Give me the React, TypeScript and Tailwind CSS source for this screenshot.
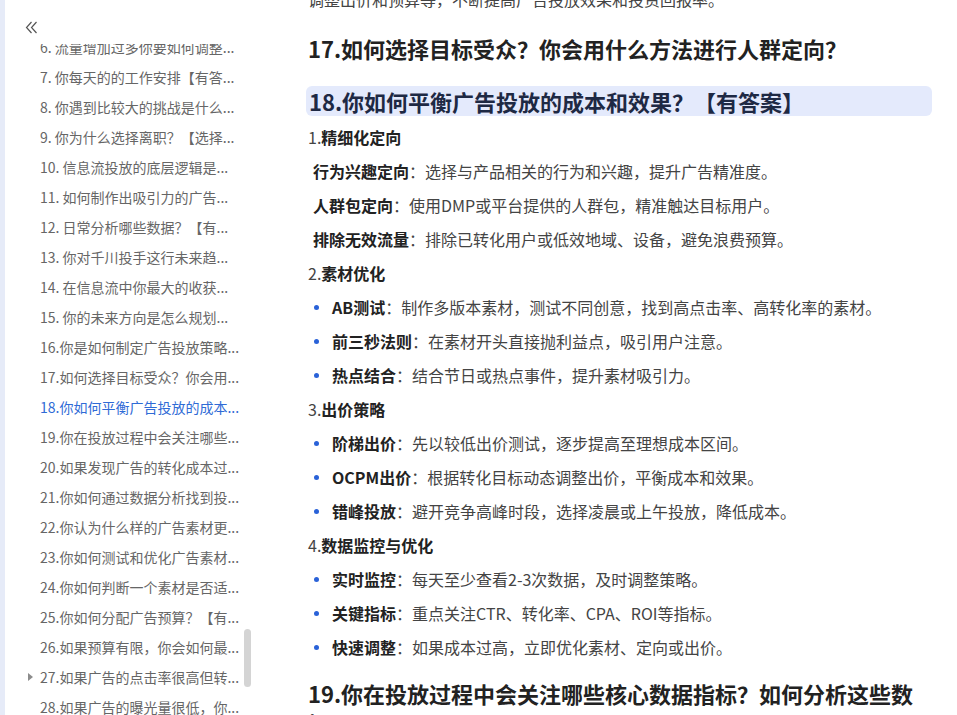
import React from "react";

const tocItems = [
  "6. 流量增加过多你要如何调整...",
  "7. 你每天的的工作安排【有答...",
  "8. 你遇到比较大的挑战是什么...",
  "9. 你为什么选择离职？【选择...",
  "10. 信息流投放的底层逻辑是...",
  "11. 如何制作出吸引力的广告...",
  "12. 日常分析哪些数据？【有...",
  "13. 你对千川投手这行未来趋...",
  "14. 在信息流中你最大的收获...",
  "15. 你的未来方向是怎么规划...",
  "16.你是如何制定广告投放策略...",
  "17.如何选择目标受众？你会用...",
  "18.你如何平衡广告投放的成本...",
  "19.你在投放过程中会关注哪些...",
  "20.如果发现广告的转化成本过...",
  "21.你如何通过数据分析找到投...",
  "22.你认为什么样的广告素材更...",
  "23.你如何测试和优化广告素材...",
  "24.你如何判断一个素材是否适...",
  "25.你如何分配广告预算？【有...",
  "26.如果预算有限，你会如何最...",
  "27.如果广告的点击率很高但转...",
  "28.如果广告的曝光量很低，你...",
];

const activeIndex = 12;
const collapsedIndex = 21;

type Section = {
  title: string;
  bullets: boolean;
  items: [string, string][];
};

const sections: Section[] = [
  {
    title: "精细化定向",
    bullets: false,
    items: [
      ["行为兴趣定向", "选择与产品相关的行为和兴趣，提升广告精准度。"],
      ["人群包定向", "使用DMP或平台提供的人群包，精准触达目标用户。"],
      ["排除无效流量", "排除已转化用户或低效地域、设备，避免浪费预算。"],
    ],
  },
  {
    title: "素材优化",
    bullets: true,
    items: [
      ["AB测试", "制作多版本素材，测试不同创意，找到高点击率、高转化率的素材。"],
      ["前三秒法则", "在素材开头直接抛利益点，吸引用户注意。"],
      ["热点结合", "结合节日或热点事件，提升素材吸引力。"],
    ],
  },
  {
    title: "出价策略",
    bullets: true,
    items: [
      ["阶梯出价", "先以较低出价测试，逐步提高至理想成本区间。"],
      ["OCPM出价", "根据转化目标动态调整出价，平衡成本和效果。"],
      ["错峰投放", "避开竞争高峰时段，选择凌晨或上午投放，降低成本。"],
    ],
  },
  {
    title: "数据监控与优化",
    bullets: true,
    items: [
      ["实时监控", "每天至少查看2-3次数据，及时调整策略。"],
      ["关键指标", "重点关注CTR、转化率、CPA、ROI等指标。"],
      ["快速调整", "如果成本过高，立即优化素材、定向或出价。"],
    ],
  },
];

const Sidebar: React.FC = () => {
  return (
    <aside className="flex w-[251px] shrink-0 flex-col">
      <div className="h-[44px] shrink-0 pl-[20px] pt-[21px]">
        <svg width="13" height="13" viewBox="0 0 13 13" fill="none">
          <polyline points="6.5,1 1.5,6.5 6.5,12" stroke="#555" strokeWidth="1.2" />
          <polyline points="11.5,1 6.5,6.5 11.5,12" stroke="#555" strokeWidth="1.2" />
        </svg>
      </div>
      <div className="flex min-h-0 flex-1 overflow-hidden">
        <ul className="-mt-[12px] w-[239px] shrink-0">
          {tocItems.map((item, i) => (
            <li key={item} className="flex h-[30px] items-center">
              <span className="flex w-[35px] shrink-0 items-center">
                {i === collapsedIndex && (
                  <svg className="ml-[23px]" width="5" height="8" viewBox="0 0 5 8">
                    <polygon points="0,0 5,4 0,8" fill="#8c8c8c" />
                  </svg>
                )}
              </span>
              <span
                className={
                  i === activeIndex
                    ? "truncate pr-[4px] text-[14px] text-[#2f6bd6]"
                    : "truncate pr-[4px] text-[14px] text-[#666]"
                }
              >
                {item}
              </span>
            </li>
          ))}
        </ul>
        <div className="w-[8px] shrink-0">
          <div className="mt-[585px] h-[58px] w-[7px] rounded-full bg-[#d4d4d4]" />
        </div>
      </div>
    </aside>
  );
};

const Article: React.FC = () => {
  return (
    <main className="min-w-0 flex-1 overflow-hidden pl-[50px] pr-[25px]">
      <p className="-mt-[14px] pl-[2px] text-[16px] leading-[26px] text-[#444]">
        调整出价和预算等，不断提高广告投放效果和投资回报率。
      </p>
      <h2 className="mt-[21px] pl-[2px] pr-[4px] text-[22px] font-bold leading-[30px] text-[#222]">
        17.如何选择目标受众？你会用什么方法进行人群定向？
      </h2>
      <h2 className="mt-[23px] rounded-[6px] bg-[#e4eafc] pl-[3px] pr-[4px] text-[22px] font-bold leading-[30px] text-[#1e2944]">
        18.你如何平衡广告投放的成本和效果？【有答案】
      </h2>
      <div className="mt-[8px]">
        {sections.map((section, si) => (
          <div key={section.title}>
            <p className="mb-[8px] pl-[2px] text-[16px] leading-[26px] text-[#444]">
              {si + 1}.<span className="font-bold text-[#222]">{section.title}</span>
            </p>
            {section.items.map(([label, text]) =>
              section.bullets ? (
                <div key={label} className="mb-[8px] flex items-center text-[16px] leading-[26px]">
                  <span className="ml-[8px] h-[5px] w-[5px] shrink-0 rounded-full bg-[#2a62d8]" />
                  <p className="ml-[13px] text-[#444]">
                    <span className="font-bold text-[#222]">{label}</span>：{text}
                  </p>
                </div>
              ) : (
                <p key={label} className="mb-[8px] pl-[7px] text-[16px] leading-[26px] text-[#444]">
                  <span className="font-bold text-[#222]">{label}</span>：{text}
                </p>
              )
            )}
          </div>
        ))}
      </div>
      <h2 className="mt-[18px] pl-[2px] pr-[4px] text-[22px] font-bold leading-[30px] text-[#222]">
        19.你在投放过程中会关注哪些核心数据指标？如何分析这些数据？
      </h2>
    </main>
  );
};

export default function App() {
  return (
    <div className="flex h-screen w-full overflow-hidden bg-white font-['Noto_Sans_CJK_SC',sans-serif]">
      <div className="w-[5px] shrink-0 bg-[#e6ebf8]" />
      <Sidebar />
      <Article />
    </div>
  );
}
